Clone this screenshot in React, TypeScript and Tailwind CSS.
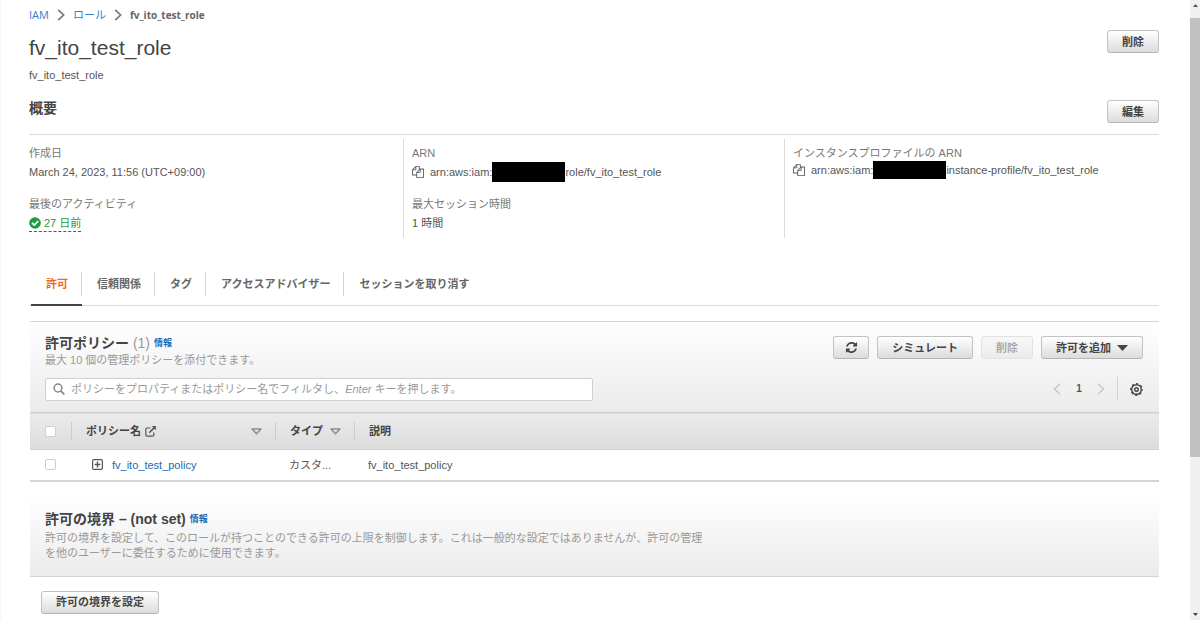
import React from "react";

type ButtonProps = React.ButtonHTMLAttributes<HTMLButtonElement>;

function AwsButton({ children, ...rest }: ButtonProps) {
  return (
    <button
      type="button"
      className="flex h-[23px] items-center justify-center rounded-[3px] border border-[#c3c3c3] border-b-[#b5b5b5] bg-linear-to-b from-white to-[#dcdcdc] px-[14px] text-[11px] leading-4 font-bold whitespace-nowrap text-[#444444] disabled:border-[#e2e2e2] disabled:from-[#f7f7f7] disabled:to-[#ececec] disabled:text-[#aaaaaa]"
      {...rest}
    >
      {children}
    </button>
  );
}

function CrumbArrow() {
  return (
    <svg className="h-3 w-2" viewBox="0 0 8 12" fill="none" stroke="#777777" strokeWidth="1.7" aria-hidden="true">
      <path d="M1.2 0.8 6.6 6 1.2 11.2" />
    </svg>
  );
}

function CopyIcon() {
  return (
    <svg className="h-3 w-3 shrink-0" viewBox="0 0 1792 1792" fill="#555555" aria-hidden="true">
      <path d="M1696 384q40 0 68 28t28 68v1216q0 40-28 68t-68 28h-960q-40 0-68-28t-28-68v-288h-544q-40 0-68-28t-28-68v-672q0-40 20-88t48-76l408-408q28-28 76-48t88-20h416q40 0 68 28t28 68v328q68-40 128-40h416zM1152 597l-299 299h299v-299zM512 213l-299 299h299v-299zM708 860l316-316v-416h-384v416q0 40-28 68t-68 28h-416v640h512v-256q0-40 20-88t48-76zM1664 1664v-1152h-384v416q0 40-28 68t-68 28h-416v640h896z" />
    </svg>
  );
}

function RefreshIcon() {
  return (
    <svg className="h-[13px] w-[13px]" viewBox="0 0 1792 1792" fill="#444444" aria-hidden="true">
      <path d="M1639 1056q0 5-1 7-64 268-268 434.5t-478 166.5q-146 0-282.5-55t-243.5-157l-129 129q-19 19-45 19t-45-19-19-45v-448q0-26 19-45t45-19h448q26 0 45 19t19 45-19 45l-137 137q71 66 161 102t187 36q134 0 250-65t186-179q11-17 53-117 8-23 30-23h192q13 0 22.5 9.5t9.5 22.5zm25-800v448q0 26-19 45t-45 19h-448q-26 0-45-19t-19-45 19-45l138-138q-148-137-349-137-134 0-250 65t-186 179q-11 17-53 117-8 23-30 23h-199q-13 0-22.5-9.5t-9.5-22.5v-7q65-268 270-434.5t480-166.5q146 0 284 55.5t245 156.5l130-129q19-19 45-19t45 19 19 45z" />
    </svg>
  );
}

function GearIcon() {
  return (
    <svg className="h-[13px] w-[13px]" viewBox="0 0 13 13" fill="none" stroke="#444444" aria-hidden="true">
      <circle cx="6.5" cy="6.5" r="4.8" strokeWidth="1.4" />
      <circle cx="6.5" cy="6.5" r="5.8" strokeWidth="1.2" strokeDasharray="2.3 2.255" strokeDashoffset="1.15" />
      <circle cx="6.5" cy="6.5" r="1.8" strokeWidth="1.4" />
    </svg>
  );
}

function SortIcon() {
  return (
    <svg className="h-[7px] w-[11px] shrink-0" viewBox="0 0 11 7" fill="none" stroke="#8c8c8c" strokeWidth="1.4" strokeLinejoin="round" aria-hidden="true">
      <path d="M1 1h9L5.5 5.8z" />
    </svg>
  );
}

function PageArrow({ d }: { d: string }) {
  return (
    <svg className="h-3 w-2" viewBox="0 0 8 12" fill="none" stroke="#c4c4c4" strokeWidth="1.3" aria-hidden="true">
      <path d={d} />
    </svg>
  );
}

function Checkbox({ label }: { label: string }) {
  return (
    <input
      type="checkbox"
      aria-label={label}
      className="block h-[11px] w-[11px] appearance-none rounded-[2px] border border-[#cfcfcf] bg-white"
    />
  );
}

function Arn({ tail, compact = false }: { tail: string; compact?: boolean }) {
  return (
    <div className="flex items-center whitespace-nowrap">
      <button type="button" aria-label="コピー" className="mr-[6px] flex">
        <CopyIcon />
      </button>
      <span>arn:aws:iam::</span>
      <span className={compact ? "z-10 -ml-[3px] h-[18px] w-[73px] bg-black" : "z-10 -ml-[3px] h-5 w-[73px] bg-black"} />
      <span>{tail}</span>
    </div>
  );
}

const tabs = ["許可", "信頼関係", "タグ", "アクセスアドバイザー", "セッションを取り消す"];

function ScrollTrack() {
  return (
    <div className="flex w-[10px] shrink-0 flex-col items-center justify-between bg-[#f0f0f0]" aria-hidden="true">
      <svg className="mt-1 mb-[11px] h-[3px] w-[5px] shrink-0" viewBox="0 0 5 3" fill="#555555">
        <path d="M0 3 2.5 0 5 3z" />
      </svg>
      <div className="w-full flex-[440] bg-[#c1c1c1]" />
      <div className="flex-[156]" />
      <svg className="mb-1 h-[3px] w-[5px] shrink-0" viewBox="0 0 5 3" fill="#444444">
        <path d="M0 0 2.5 3 5 0z" />
      </svg>
    </div>
  );
}

export default function App() {
  return (
    <div
      lang="ja"
      className="flex min-h-screen bg-white font-['Liberation_Sans','Noto_Sans_CJK_JP',sans-serif] text-[11px] leading-4 text-[#555555]"
    >
      <main className="min-w-0 flex-1 border-l border-[#f5f5f5] pt-[7px] pr-[31px] pl-7">
        <nav aria-label="パンくずリスト" className="flex h-4 items-center gap-2 font-['Open_Sans','Noto_Sans_CJK_JP',sans-serif]">
          <a href="#iam" className="text-[#2f80c8]">IAM</a>
          <CrumbArrow />
          <a href="#roles" className="text-[#2f80c8]">ロール</a>
          <CrumbArrow />
          <span className="text-[10px] font-bold text-[#666666]">fv_ito_test_role</span>
        </nav>

        <header className="mt-[7px] flex justify-between">
          <div>
            <h1 className="text-[21px] leading-9 text-[#444444]">fv_ito_test_role</h1>
            <p className="mt-[1px]">fv_ito_test_role</p>
          </div>
          <AwsButton>削除</AwsButton>
        </header>

        <section>
          <div className="mt-[17px] flex items-start justify-between border-b border-[#dadada] pb-[11px]">
            <h2 className="text-[14px] leading-4 font-bold text-[#444444]">概要</h2>
            <AwsButton>編集</AwsButton>
          </div>
          <div className="mt-1 grid h-[99px] grid-cols-[374fr_381fr_375fr]">
            <div className="pt-[6px]">
              <div className="text-[#777777]">作成日</div>
              <div className="mt-[3px]">March 24, 2023, 11:56 (UTC+09:00)</div>
              <div className="mt-4 text-[#777777]">最後のアクティビティ</div>
              <div className="mt-[3px] inline-flex items-center gap-[3px] border-b border-dashed border-[#555555] text-[#1d9d3f]">
                <svg className="h-3 w-3" viewBox="0 0 12 12" aria-hidden="true">
                  <circle cx="6" cy="6" r="5.8" fill="#1d9d3f" />
                  <path d="M3 5.8 5.3 8.1 9.2 4.2" fill="none" stroke="#ffffff" strokeWidth="1.8" />
                </svg>
                27 日前
              </div>
            </div>
            <div className="border-l border-[#dadada] pt-[6px] pl-2">
              <div className="text-[#777777]">ARN</div>
              <div className="mt-[1px]">
                <Arn tail="role/fv_ito_test_role" />
              </div>
              <div className="mt-[14px] text-[#777777]">最大セッション時間</div>
              <div className="mt-[3px]">1 時間</div>
            </div>
            <div className="border-l border-[#dadada] pt-[6px] pl-2">
              <div className="text-[#777777]">インスタンスプロファイルの ARN</div>
              <Arn compact tail="instance-profile/fv_ito_test_role" />
            </div>
          </div>
        </section>

        <div className="pl-px">
          <div role="tablist" className="mt-6 flex h-11 items-start border-b border-[#dadada] pl-px font-bold text-[#666666]">
            {tabs.map((tab, i) => (
              <div key={tab} className={i === 0 ? "h-11 border-b-2 border-[#444444]" : "h-11"}>
                <button
                  type="button"
                  role="tab"
                  aria-selected={i === 0}
                  className={
                    i === 0
                      ? "mt-[10px] h-6 border-r border-[#d5d5d5] pr-[13px] pl-[15px] text-[#ec6a1c]"
                      : i < tabs.length - 1
                        ? "mt-[10px] h-6 border-r border-[#d5d5d5] pr-[13px] pl-[15px]"
                        : "mt-[10px] h-6 pr-[13px] pl-[15px]"
                  }
                >
                  {tab}
                </button>
              </div>
            ))}
          </div>

          <section className="mt-[15px] border-b-2 border-[#d5d5d5]">
            <div className="border-t border-[#d5d5d5] bg-linear-to-b from-white to-[#ebebeb] pt-3 pr-4 pb-[11px] pl-[15px]">
              <div className="flex justify-between">
                <div>
                  <div className="flex items-center gap-1">
                    <h2 className="text-[14px] leading-[18px] font-bold text-[#444444]">
                      許可ポリシー <span className="font-normal text-[#999999]">(1)</span>
                    </h2>
                    <a href="#info" className="text-[9px] font-bold text-[#2268b8]">情報</a>
                  </div>
                  <p className="leading-4 text-[#999999]">最大 10 個の管理ポリシーを添付できます。</p>
                </div>
                <div className="flex gap-2 pt-[2px]">
                  <button
                    type="button"
                    aria-label="更新"
                    className="flex h-[23px] w-9 items-center justify-center rounded-[3px] border border-[#c3c3c3] border-b-[#b5b5b5] bg-linear-to-b from-white to-[#dcdcdc]"
                  >
                    <RefreshIcon />
                  </button>
                  <AwsButton>シミュレート</AwsButton>
                  <AwsButton disabled>削除</AwsButton>
                  <AwsButton>
                    許可を追加
                    <svg className="ml-[6px] h-[6px] w-[11px]" viewBox="0 0 11 6" fill="#444444" aria-hidden="true">
                      <path d="M0 0h11L5.5 6z" />
                    </svg>
                  </AwsButton>
                </div>
              </div>
              <div className="mt-[9px] flex items-center justify-between">
                <div className="relative flex h-[23px] w-[548px] items-center gap-[6px] rounded-[2px] border border-[#d0d0d0] bg-white px-[7px]">
                  <svg className="h-3 w-3" viewBox="0 0 12 12" fill="none" stroke="#888888" aria-hidden="true">
                    <circle cx="5" cy="5" r="3.9" strokeWidth="1.5" />
                    <path d="M7.8 7.8 11.3 11.3" strokeWidth="1.7" />
                  </svg>
                  <label htmlFor="policy-filter" className="whitespace-nowrap text-[#999999]">
                    ポリシーをプロパティまたはポリシー名でフィルタし、<i>Enter</i> キーを押します。
                  </label>
                  <input id="policy-filter" type="text" className="absolute inset-0 bg-transparent pl-[25px] outline-none" />
                </div>
                <div className="flex items-center">
                  <button type="button" aria-label="前へ" className="flex"><PageArrow d="M7 .8 1.5 6 7 11.2" /></button>
                  <span className="w-9 text-center text-[10px] font-bold text-[#555555]">1</span>
                  <button type="button" aria-label="次へ" className="flex"><PageArrow d="M1 .8 6.5 6 1 11.2" /></button>
                  <span className="mr-3 ml-3 h-6 w-px bg-[#d3d3d3]" />
                  <button type="button" aria-label="設定" className="flex"><GearIcon /></button>
                </div>
              </div>
            </div>

            <table className="w-full table-fixed border-collapse text-left">
              <colgroup>
                <col className="w-[41px]" />
                <col className="w-[204px]" />
                <col className="w-[79px]" />
                <col />
              </colgroup>
              <thead>
                <tr className="h-[37px] border-y border-[#d0d0d0] bg-linear-to-b from-[#ebebeb] to-[#dcdcdc] text-[#444444]">
                  <th className="p-0 pl-[15px]">
                    <Checkbox label="すべて選択" />
                  </th>
                  <th className="p-0">
                    <div className="flex h-[18px] items-center border-l border-[#cccccc] pr-[13px] pl-[14px]">
                      ポリシー名
                      <svg className="ml-1 h-[11px] w-[11px]" viewBox="0 0 11 11" fill="none" stroke="#555555" strokeWidth="1.2" aria-hidden="true">
                        <path d="M5.5 2H2Q.8 2 .8 3.2V9Q.8 10.2 2 10.2H7.6Q8.8 10.2 8.8 9V6.6" />
                        <path d="M4.2 6.8 9.4 1.6" strokeWidth="1.5" />
                        <path d="M6.8 .1H10.9V4.2z" fill="#555555" stroke="none" />
                      </svg>
                      <span className="flex-1" />
                      <SortIcon />
                    </div>
                  </th>
                  <th className="p-0">
                    <div className="flex h-[18px] items-center justify-between border-l border-[#cccccc] pr-[13px] pl-[14px]">
                      タイプ
                      <SortIcon />
                    </div>
                  </th>
                  <th className="p-0">
                    <div className="flex h-[18px] items-center border-l border-[#cccccc] pl-[14px]">説明</div>
                  </th>
                </tr>
              </thead>
              <tbody>
                <tr className="h-[30px]">
                  <td className="p-0 pl-[15px]">
                    <Checkbox label="fv_ito_test_policy を選択" />
                  </td>
                  <td className="p-0">
                    <div className="flex items-center gap-[9px] pl-[21px]">
                      <button type="button" aria-label="展開" className="flex">
                        <svg className="h-[11px] w-[11px]" viewBox="0 0 11 11" fill="none" stroke="#555555" aria-hidden="true">
                          <rect x=".6" y=".6" width="9.8" height="9.8" rx="1.2" strokeWidth="1.2" />
                          <path d="M5.5 2.6v5.8M2.6 5.5h5.8" strokeWidth="1.4" />
                        </svg>
                      </button>
                      <a href="#policy" className="text-[#2268b8]">fv_ito_test_policy</a>
                    </div>
                  </td>
                  <td className="p-0 pl-[14px]">カスタ...</td>
                  <td className="p-0 pl-[14px]">fv_ito_test_policy</td>
                </tr>
              </tbody>
            </table>
          </section>

          <section className="mt-3 border-b border-[#d5d5d5] bg-linear-to-b from-white to-[#ebebeb] px-[15px] pt-4 pb-[15px]">
            <div className="flex items-center gap-1">
              <h2 className="text-[14px] leading-[18px] font-bold text-[#444444]">許可の境界 – (not set)</h2>
              <a href="#boundary-info" className="text-[9px] font-bold text-[#2268b8]">情報</a>
            </div>
            <p className="mt-[3px] max-w-[664px] leading-[15px] text-[#999999]">
              許可の境界を設定して、このロールが持つことのできる許可の上限を制御します。これは一般的な設定ではありませんが、許可の管理を他のユーザーに委任するために使用できます。
            </p>
          </section>
          <div className="mt-[14px] flex pl-[11px]">
            <AwsButton>許可の境界を設定</AwsButton>
          </div>
        </div>
      </main>
      <ScrollTrack />
    </div>
  );
}
